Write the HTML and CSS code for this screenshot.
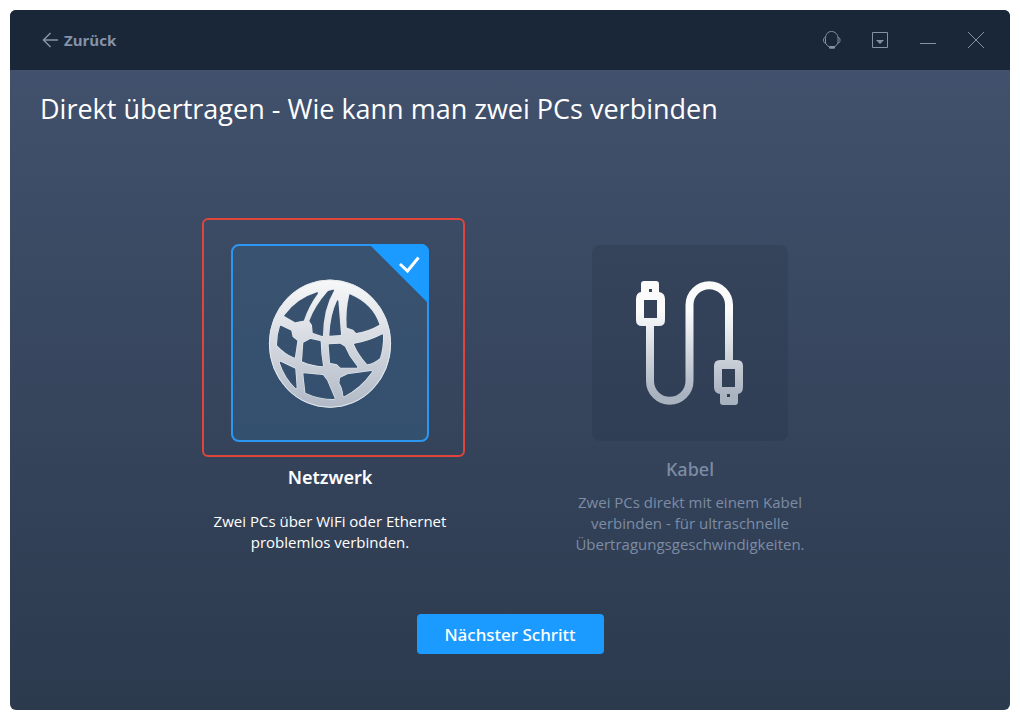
FILE: index.html
```
<!DOCTYPE html>
<html lang="de">
<head>
<meta charset="utf-8">
<meta name="viewport" content="width=device-width, initial-scale=1">
<title>Direkt übertragen</title>
<link rel="stylesheet" href="styles.css">
</head>
<body>
<div class="window">
  <header class="titlebar">
    <button class="back" type="button">
      <svg class="back-icon" viewBox="0 0 16 16" aria-hidden="true"><path d="M8.500 1 1.500 8l7 7M1.500 8H16"/></svg>
      <span>Zurück</span>
    </button>
    <div class="controls">
      <button class="control" type="button" aria-label="Support">
        <svg viewBox="0 0 20 20" aria-hidden="true"><path d="M3.500 13V8.500C3.500 4 6 1.500 9.500 1.500s6.500 2.500 6.500 7V13M3.500 7.500C2 7.500 1.500 8.500 1.500 10.200S2 13 3.500 13M16 7.500c1.500 0 2 1 2 2.700s-.5 2.800-2 2.800M3.500 13Q5 16 7.500 17M16 13Q14.500 16 12 17"/><rect class="solid" x="7" y="16" width="6" height="2.800" rx="1.400"/></svg>
      </button>
      <button class="control" type="button" aria-label="Menü">
        <svg viewBox="0 0 20 20" aria-hidden="true"><path d="M2.500 2.500h15v15h-15z"/><path class="solid" d="M6 10h8l-4 4z"/></svg>
      </button>
      <button class="control" type="button" aria-label="Minimieren">
        <svg viewBox="0 0 20 20" aria-hidden="true"><path d="M2 13.500h16"/></svg>
      </button>
      <button class="control" type="button" aria-label="Schließen">
        <svg viewBox="0 0 20 20" aria-hidden="true"><path d="M2 2l16 16M18 2 2 18"/></svg>
      </button>
    </div>
  </header>
  <main class="content">
    <h1 class="title">Direkt übertragen - Wie kann man zwei PCs verbinden</h1>
    <form class="form">
      <div class="options">
        <label class="option option-selected">
          <input class="option-input" type="radio" name="connection" value="network" checked>
          <span class="card">
            <span class="highlight"></span>
            <svg class="corner" viewBox="0 0 60 60" aria-hidden="true"><path class="corner-fill" d="M0 0h52a8 8 0 0 1 8 8v52z"/><path class="corner-check" d="M31 20 38.500 27 49.500 13.500"/></svg>
            <svg class="globe" viewBox="0 0 420 435" aria-hidden="true">
              <defs>
                <linearGradient id="globe-fill" x1="0" y1="0" x2="0" y2="1"><stop offset="0" stop-color="#f8f8f9"/><stop offset="1" stop-color="#b0b9c6"/></linearGradient>
                <path id="globe-holes" d="
                M75 134Q112 84 172 66Q144 104 130 147L120 149 106 152z
                M205 62 220 58Q188 112 187 193L160 184 158 162 150 150Q166 106 205 62z
                M233 90 241 190 210 192Q213 132 233 90z
                M270 72Q336 100 356 160Q325 178 289 184L280 174 262 168Q259 118 270 72z
                M62 166 92 180 96 199 110 210 103 258Q75 246 53 222Q53 193 62 166z
                M132 216 152 206 180 212Q181 248 187 284Q158 283 128 270z
                M208 222 240 220 253 228 268 258 290 288 242 288 232 278 212 274z
                M284 220Q325 213 367 192Q368 230 358 260Q344 273 322 278Q297 250 284 220z
                M61 274 104 294 108 350Q76 320 61 274z
                M132 309 188 314 200 330 222 382Q176 382 138 364z
                M242 322 262 312 334 302Q300 350 252 374Q249 350 240 336z"/>
                <mask id="globe-mask" maskUnits="userSpaceOnUse" x="0" y="0" width="420" height="435"><rect width="420" height="435" fill="#fff"/><use href="#globe-holes" fill="#000" stroke="#000" stroke-width="4" stroke-linejoin="round"/></mask>
              </defs>
              <g mask="url(#globe-mask)">
                <ellipse cx="210" cy="218" rx="183" ry="192" fill="url(#globe-fill)"/>
                <ellipse class="globe-edge" cx="210" cy="218" rx="182" ry="191"/>
                <use class="globe-edge" href="#globe-holes"/>
              </g>
            </svg>
          </span>
          <span class="option-name">Netzwerk</span>
          <span class="option-text">Zwei PCs über WiFi oder Ethernet problemlos verbinden.</span>
        </label>
        <label class="option">
          <input class="option-input" type="radio" name="connection" value="cable">
          <span class="card">
            <svg class="cable" viewBox="0 0 120 130" aria-hidden="true">
              <defs><linearGradient id="cable-fill" gradientUnits="userSpaceOnUse" x1="0" y1="0" x2="0" y2="130"><stop offset=".25" stop-color="#fbfbfc"/><stop offset=".9" stop-color="#a9b2bf"/></linearGradient></defs>
              <path fill="none" stroke="url(#cable-fill)" stroke-width="8" d="M20 44v59a19.700 19.700 0 0 0 39.500 0V27a19.700 19.700 0 0 1 39.500 0v58"/>
              <path fill="url(#cable-fill)" fill-rule="evenodd" d="M14 3h12q3 0 3 3v8q6 1 6 7v21q0 6-6 6H12q-6 0-6-6V21q0-6 5-7V6q0-3 3-3zM14 22v18h13V22zM19 11v3h3v-3z"/>
              <path fill="url(#cable-fill)" fill-rule="evenodd" d="M90 82h17q6 0 6 6v21q0 6-5 7v8q0 3-3 3H93q-3 0-3-3v-8q-6-1-6-7V88q0-6 6-6zM92 91v18h13V91zM97 116v3h3v-3z"/>
            </svg>
          </span>
          <span class="option-name">Kabel</span>
          <span class="option-text">Zwei PCs direkt mit einem Kabel verbinden - für ultraschnelle Übertragungsgeschwindigkeiten.</span>
        </label>
      </div>
      <button class="next" type="button">Nächster Schritt</button>
    </form>
  </main>
</div>
</body>
</html>
```
FILE: styles.css
```
* {
  box-sizing: border-box;
}

body {
  margin: 0;
  padding: 10px;
  min-height: 100vh;
  display: flex;
  background: #fff;
  color: #fff;
  font-family: "Open Sans", "Noto Sans", sans-serif;
}

button {
  border: 0;
  padding: 0;
  background: none;
  color: inherit;
  font-family: inherit;
  cursor: pointer;
}

.window {
  flex: 1;
  display: flex;
  flex-direction: column;
  overflow: hidden;
  border-radius: 6px;
  background: linear-gradient(#43536f, #2c3a4e);
}

.titlebar {
  display: flex;
  align-items: center;
  justify-content: space-between;
  height: 60px;
  padding: 0 24px 0 32px;
  background: #1a2739;
  color: #8693a8;
}

.back {
  display: flex;
  align-items: center;
  gap: 6px;
  font-size: 15px;
  line-height: 22px;
  font-weight: 700;
}

.back-icon {
  width: 16px;
  height: 16px;
  fill: none;
  stroke: currentColor;
  stroke-width: 1.5;
}

.controls {
  display: flex;
  gap: 28px;
}

.control {
  display: flex;
}

.control svg {
  width: 20px;
  height: 20px;
  fill: none;
  stroke: #8592a5;
}

.control .solid {
  fill: #8592a5;
  stroke: none;
}

.content {
  flex: 1;
  padding: 20px 30px;
}

.title {
  margin: 0;
  font-size: 27px;
  line-height: 38px;
  font-weight: 400;
}

.form {
  display: flex;
  flex-direction: column;
  align-items: center;
  gap: 59px;
  padding-top: 116px;
}

.options {
  display: flex;
  justify-content: center;
  gap: 120px;
}

.option {
  display: flex;
  flex-direction: column;
  align-items: center;
  width: 240px;
  color: #7d8ca5;
  text-align: center;
  cursor: pointer;
}

.option-selected {
  color: #fff;
}

.option-input {
  position: absolute;
  opacity: 0;
}

.card {
  position: relative;
  display: flex;
  align-items: center;
  justify-content: center;
  width: 196px;
  height: 196px;
  margin: 1px;
  border-radius: 8px;
  background: linear-gradient(#35445b, #303e55);
}

.option-selected .card {
  width: 198px;
  height: 198px;
  margin: 0;
  border: 2px solid #2c97f3;
  background: linear-gradient(#39526f, #34506f);
}

.highlight {
  position: absolute;
  inset: -28px -38px -17px -31px;
  border: 2px solid #e0443a;
  border-radius: 6px;
}

.corner {
  position: absolute;
  top: -2px;
  right: -2px;
  width: 60px;
  height: 60px;
}

.corner-fill {
  fill: #1b9bff;
}

.corner-check {
  fill: none;
  stroke: #fff;
  stroke-width: 3;
}

.globe {
  width: 140px;
  height: 145px;
}

.globe-edge {
  fill: none;
  stroke: #e3e8ed;
  stroke-width: 8;
  stroke-linejoin: round;
}

ellipse.globe-edge {
  stroke-width: 3;
}

.cable {
  width: 120px;
  height: 130px;
}

.option-name {
  margin-top: 14px;
  font-family: "Noto Sans", sans-serif;
  font-size: 18px;
  line-height: 26px;
  font-weight: 500;
}

.option-text {
  margin-top: 10px;
  font-size: 15px;
  line-height: 21px;
}

.option-selected .option-name {
  margin-top: 22px;
  font-weight: 600;
}

.option-selected .option-text {
  margin-top: 21px;
}

.next {
  min-width: 187px;
  height: 40px;
  padding: 0 24px;
  border-radius: 4px;
  background: #1b9bff;
  font-family: "Noto Sans", sans-serif;
  font-size: 17px;
  font-weight: 500;
}
```
